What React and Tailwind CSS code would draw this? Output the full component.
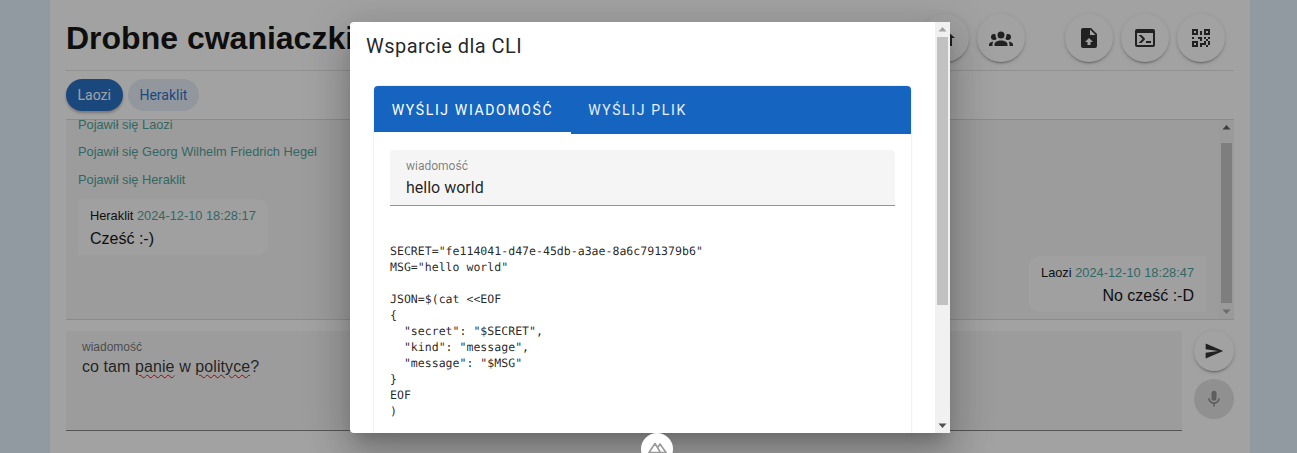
import React from 'react';

const ROBOTO = 'font-["Roboto",sans-serif]';
const ICONS = {
  home: 'M10,20V14H14V20H19V12H22L12,3L2,12H5V20H10Z',
  group: 'M12,5.5A3.5,3.5 0 0,1 15.5,9A3.5,3.5 0 0,1 12,12.5A3.5,3.5 0 0,1 8.5,9A3.5,3.5 0 0,1 12,5.5M5,8C5.56,8 6.08,8.15 6.53,8.42C6.38,9.85 6.8,11.27 7.66,12.38C7.16,13.34 6.16,14 5,14A3,3 0 0,1 2,11A3,3 0 0,1 5,8M19,8A3,3 0 0,1 22,11A3,3 0 0,1 19,14C17.84,14 16.84,13.34 16.34,12.38C17.2,11.27 17.62,9.85 17.47,8.42C17.92,8.15 18.44,8 19,8M5.5,18.25C5.5,16.18 8.41,14.5 12,14.5C15.59,14.5 18.5,16.18 18.5,18.25V20H5.5V18.25M0,20V18.5C0,17.11 1.89,15.94 4.45,15.6C3.86,16.28 3.5,17.22 3.5,18.25V20H0M24,20H20.5V18.25C20.5,17.22 20.14,16.28 19.55,15.6C22.11,15.94 24,17.11 24,18.5V20Z',
  upload: 'M6,2H14L20,8V20A2,2 0 0 1 18,22H6A2,2 0 0 1 4,20V4A2,2 0 0 1 6,2ZM13,3.5V9H18.5ZM12,12L8,16H10.5V19H13.5V16H16Z',
  console: 'M20,19V7H4V19H20M20,3A2,2 0 0,1 22,5V19A2,2 0 0,1 20,21H4A2,2 0 0,1 2,19V5C2,3.89 2.9,3 4,3H20M13,17V15H18V17H13M9.58,13L5.57,9H8.4L11.7,12.3C12.09,12.69 12.09,13.33 11.7,13.72L8.42,17H5.59L9.58,13Z',
  qrcode: 'M3,11H5V13H3V11M11,5H13V9H11V5M9,11H13V15H11V13H9V11M15,11H17V13H19V11H21V13H19V15H21V19H19V21H17V19H13V21H11V17H15V15H17V13H15V11M19,19V15H17V19H19M15,3H21V9H15V3M17,5V7H19V5H17M3,3H9V9H3V3M5,5V7H7V5H5M3,15H9V21H3V15M5,17V19H7V17H5Z',
  send: 'M2,21L23,12L2,3V10L17,12L2,14V21Z',
  mic: 'M12,2A3,3 0 0,1 15,5V11A3,3 0 0,1 12,14A3,3 0 0,1 9,11V5A3,3 0 0,1 12,2M19,11C19,14.53 16.39,17.44 13,17.93V21H11V17.93C7.61,17.44 5,14.53 5,11H7A5,5 0 0,0 12,16A5,5 0 0,0 17,11H19Z',
};

const CODE = `SECRET="fe114041-d47e-45db-a3ae-8a6c791379b6"
MSG="hello world"

JSON=$(cat <<EOF
{
  "secret": "$SECRET",
  "kind": "message",
  "message": "$MSG"
}
EOF
)`;

const Icon = ({ name, className }) => (
  <svg viewBox="0 0 24 24" className={className} fill="currentColor" fillRule="evenodd">
    <path d={ICONS[name]} />
  </svg>
);

const ToolButton = ({ icon }) => (
  <button className="flex h-12 w-12 items-center justify-center rounded-full bg-white text-[#000000de] shadow-[0_3px_1px_-2px_rgba(0,0,0,0.2),0_2px_2px_0_rgba(0,0,0,0.14),0_1px_5px_0_rgba(0,0,0,0.12)]">
    <Icon name={icon} className="h-6 w-6" />
  </button>
);

const Notice = ({ children }) => (
  <p className="mb-[11.5px] h-[16px] flex-none pl-3 text-[12.8px] leading-[16px] text-[#3f9a92]">{children}</p>
);

const Bubble = ({ name, date, text, right }) => (
  <div
    className={
      right
        ? 'ml-auto mr-[13px] mt-px h-[56px] w-fit flex-none whitespace-nowrap rounded-l-xl bg-[#fcfcfc] px-3 pt-[9px] text-right'
        : 'ml-3 h-[56px] w-fit flex-none whitespace-nowrap rounded-r-xl rounded-tl-sm bg-[#fcfcfc] px-3 pt-[9px]'
    }
  >
    <div className="text-[12.8px] leading-[16px] text-black">
      {name} <span className="text-[#3f9a92]">{date}</span>
    </div>
    <div className="mt-[4px] text-[16px] leading-[22px] text-black">{text}</div>
  </div>
);

// Classic scrollbar look: arrow button, track with thumb, arrow button
const Scrollbar = ({ upColor, downColor, thumbTop, thumbHeight, thumbColor, trackColor }) => (
  <div className={`flex w-[15px] flex-none flex-col ${trackColor}`}>
    <svg viewBox="0 0 15 15" className={`h-[15px] w-[15px] flex-none ${upColor}`} fill="currentColor">
      <path d="M7.5,5L11.5,9.5H3.5Z" />
    </svg>
    <div className={`flex-1 px-[2px] ${thumbTop}`}>
      <div className={`w-[11px] ${thumbHeight} ${thumbColor}`} />
    </div>
    <svg viewBox="0 0 15 15" className={`h-[15px] w-[15px] flex-none ${downColor}`} fill="currentColor">
      <path d="M3.5,5.5H11.5L7.5,10Z" />
    </svg>
  </div>
);

const CliDialog = () => (
  <div className="absolute left-[350px] top-[22px] flex h-[411px] w-[600px] overflow-hidden rounded-l bg-white shadow-[0_11px_15px_-7px_rgba(0,0,0,0.2),0_24px_38px_3px_rgba(0,0,0,0.14),0_9px_46px_8px_rgba(0,0,0,0.12)]">
    <div className="min-w-0 flex-1 overflow-hidden">
      <h2 className={`px-4 pt-[10px] text-[20px] leading-[28px] tracking-[0.45px] text-[#000000de] ${ROBOTO}`}>
        Wsparcie dla CLI
      </h2>
      <div className="mx-6 mt-[26px] h-[500px] rounded-t bg-white shadow-[0_0_2px_rgba(0,0,0,0.2)]">
        <div className={`flex h-12 rounded-t bg-[#1565c0] text-[14px] font-normal tracking-[1.65px] text-white ${ROBOTO}`}>
          <div className="flex w-[197px] items-center justify-center border-b-2 border-white pt-[2px]">WYŚLIJ WIADOMOŚĆ</div>
          <div className="flex w-[133px] items-center justify-center text-white/90">WYŚLIJ PLIK</div>
        </div>
        <div className="px-4 pt-4">
          <div className={`h-14 rounded-t border-b border-[#949494] bg-[#f5f5f5] px-4 pt-[8px] ${ROBOTO}`}>
            <div className="text-[12px] leading-[16px] text-[#00000080]">wiadomość</div>
            <div className="mt-[2px] text-[16px] leading-[24px] text-[#000000de]">hello world</div>
          </div>
          <pre className="mt-[37px] font-['DejaVu_Sans_Mono',monospace] text-[11.56px] leading-[16px] text-[#000000de] [text-rendering:geometricPrecision]">{CODE}</pre>
        </div>
      </div>
    </div>
    <Scrollbar
      upColor="text-[#a3a3a3]"
      downColor="text-[#505050]"
      thumbTop="pt-0"
      thumbHeight="h-[268px]"
      thumbColor="bg-[#c1c1c1]"
      trackColor="bg-[#f1f1f1]"
    />
  </div>
);

export default function App() {
  return (
    <div className="relative h-[453px] w-full overflow-hidden bg-[#e3f2fd] font-['Liberation_Sans',sans-serif]">
      <div className="ml-[50px] h-[453px] w-[1200px] bg-white px-4">
        {/* Header */}
        <div className="flex h-[71px] items-center border-b border-[#0000001f] pt-[5px]">
          <h1 className="text-[32px] font-bold leading-[40px] text-black">Drobne cwaniaczki</h1>
          <div className="ml-auto flex gap-2">
            <ToolButton icon="home" />
            <ToolButton icon="group" />
          </div>
          <div className="ml-10 mr-[9px] flex gap-2">
            <ToolButton icon="upload" />
            <ToolButton icon="console" />
            <ToolButton icon="qrcode" />
          </div>
        </div>

        {/* Participants */}
        <div className={`flex h-[48px] items-start gap-[5px] pt-2 text-[14px] ${ROBOTO}`}>
          <span className="flex h-8 items-center rounded-full bg-[#1565c0] pl-[11.5px] pr-3 text-white shadow-[0_2px_3px_rgba(0,0,0,0.3)]">Laozi</span>
          <span className="flex h-8 items-center rounded-full bg-[#e3ecf8] px-[11.5px] text-[#1565c0]">Heraklit</span>
        </div>

        {/* Messages */}
        <div className="flex h-[201px] border-y border-[#0000001f] bg-[#f5f5f5]">
          <div className="flex min-w-0 flex-1 flex-col justify-end overflow-hidden pb-[7px]">
            <Notice>Pojawił się Laozi</Notice>
            <Notice>Pojawił się Georg Wilhelm Friedrich Hegel</Notice>
            <Notice>Pojawił się Heraklit</Notice>
            <Bubble name="Heraklit" date="2024-12-10 18:28:17" text="Cześć :-)" />
            <Bubble right name="Laozi" date="2024-12-10 18:28:47" text="No cześć :-D" />
          </div>
          <Scrollbar
            upColor="text-[#505050]"
            downColor="text-[#a3a3a3]"
            thumbTop="pt-2"
            thumbHeight="h-[160px]"
            thumbColor="bg-[#c1c1c1]"
            trackColor="bg-[#f1f1f1]"
          />
        </div>

        {/* Message input */}
        <div className="mt-[11px] flex gap-3">
          <div className="h-[100px] flex-1 rounded-t border-b border-[#00000080] bg-[#f5f5f5] px-4 pt-[8px]">
            <div className="text-[12px] leading-[16px] text-[#00000099]">wiadomość</div>
            <div className="mt-[1px] text-[16px] leading-[22px] tracking-[0.08px] text-[#000000de]">
              co tam{' '}
              <span className="underline decoration-[#e00000] decoration-wavy decoration-1 underline-offset-2">panie</span>
              {' '}w{' '}
              <span className="underline decoration-[#e00000] decoration-wavy decoration-1 underline-offset-2">polityce</span>?
            </div>
          </div>
          <div className="flex flex-col gap-2">
            <button className="flex h-10 w-10 items-center justify-center rounded-full bg-white text-[#000000de] shadow-[0_3px_1px_-2px_rgba(0,0,0,0.2),0_2px_2px_0_rgba(0,0,0,0.14),0_1px_5px_0_rgba(0,0,0,0.12)]">
              <Icon name="send" className="h-5 w-5" />
            </button>
            <button className="flex h-10 w-10 items-center justify-center rounded-full bg-[#e0e0e0] text-[#00000061]">
              <Icon name="mic" className="h-5 w-5" />
            </button>
          </div>
        </div>
      </div>

      {/* Dialog scrim */}
      <div className="absolute inset-0 bg-[rgba(33,33,33,0.42)]" />

      <CliDialog />

      {/* Nuxt devtools button */}
      <div className="absolute left-[641px] top-[433px] flex h-8 w-8 items-start justify-center rounded-full bg-white pt-[9px]">
        <svg viewBox="0 0 19 11" className="h-[11px] w-[19px]" fill="none" stroke="#9a9a9a" strokeWidth="1.6" strokeLinejoin="round">
          <path d="M1,10.5L7,1.5L12.5,10.5ZM10,5L12,2L18,10.5H12.5" />
        </svg>
      </div>
    </div>
  );
}
